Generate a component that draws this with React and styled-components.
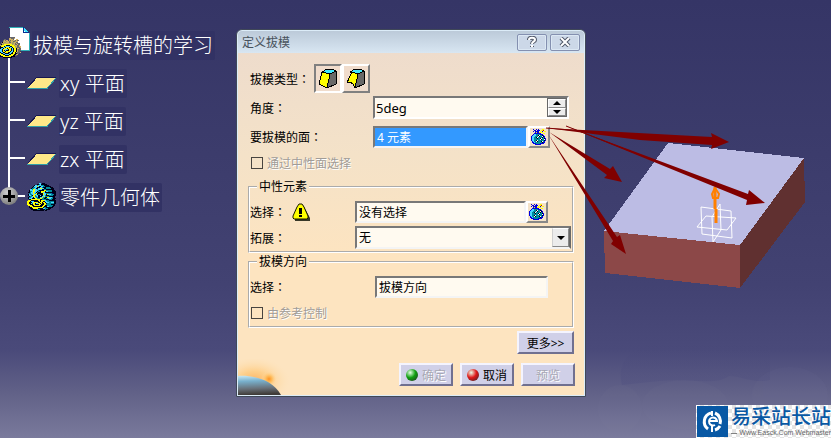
import React, { useState } from "react";
import styled, { createGlobalStyle } from "styled-components";

const planes = ["xy 平面", "yz 平面", "zx 平面"];

// one character is one pixel
const palette = {
  k: "#000018",
  n: "#000080",
  b: "#0000e0",
  c: "#48d8ff",
  t: "#008c9c",
  y: "#ffff00",
  w: "#ffffff",
  r: "#d00000",
  g: "#68686c",
  o: "#d0b060",
  a: "#a0a060",
};

const bagPixels = [
  "..b..b.b...yy...",
  "...bb.bbb.yyr...",
  "..b.bbbb.y.b.yy.",
  "....bybbyyyy....",
  "...bbbbbbb..yy..",
  "..bccttttbbb....",
  ".bcccttkwttkb...",
  "bccctttwkttwkb..",
  "bccttkwttttktb..",
  "bcctttkttkwttkb.",
  "bccttttttwkttwb.",
  "bccttkwttttttkb.",
  ".bcttwktttkwtb..",
  ".bbctttttttkbb..",
  "..bbbttttbbbb...",
  "....bbbbbb......",
];

const bodyPixels = [
  "............cc.kkk............",
  "..........kktckkkkkk..........",
  ".......kcctccctttkkkkk........",
  "......kcccyckkccttkkkkkk......",
  ".....kttcckkkcctkkkttttkkk....",
  "....kttcckkccyycckktttttkkk...",
  "...cctyycctcccckkttkkkkkkkk...",
  "..kcccyyccctkkkkkyyttttttkkk..",
  "..kttcyycckttkyyyykccttttkkkk.",
  ".kktccyccktkkkyycckkkkkkkkkkk.",
  "..ttccyctykkkkkkyccttttttnkkk.",
  ".kcttccyyckttkkkycckyccctttkk.",
  ".kcctkyytcckkckkcctkkkttttkkk.",
  "..kttcyyttckkkkccyttttkkkkkk..",
  ".kttcckycttkkccyttkkyyccctkk..",
  ".kccckkkyytttyyttkkttcccttkkk.",
  "..kkyyyyyyyyykkttttkkktttkkk..",
  ".yyykkkkkkkyykyyyyctttkkkkkkk.",
  "yyykccckkkkkykyykkcctttttttkk.",
  "yykkkcyyyyykkyykyykcccttccckk.",
  "yykkctyykccyykykkyyktttttttkk.",
  "yyykkkyykkkkyykkkyytttttkkkk..",
  ".yyyykkyyyyyykkkyykkttttttkk..",
  "..kyyykkkkkkkkkyykkkcctttkk...",
  "..kkkyyyyyyyyyyykttkkkkkkk....",
  "...kkkyyyyykkkkkcctttkkk......",
  "....kkkkkktttkkkkktkkkk.......",
  "......kkkkkkkkkkk.kk..........",
];

const gearPixels = [
  "..........ggggg.......",
  ".........oogggo.......",
  "....gg...oooog..oo....",
  "...gogoo.ogoaoogogg...",
  "...aooaoogaooggaoo....",
  ".gkoaaoooggoaaoogg....",
  ".goaooooooooaaogoggg..",
  "gkaayyyyyyyyaooggogg..",
  "ooyyyykkkkyyyyaooggo..",
  "kyyykccccckkyyyaoggoo.",
  "kkkcckyyykcckyyoagggo.",
  "kcckyyykyyykckyykoogg.",
  "cckyyccckyykckyykaggg.",
  "cckykckkkyykckyykoggg.",
  "cckyykyyyykcckyykogg..",
  "kcckkyyykkcckyykogggo.",
  "ykkcckkkkcckkyykkgg...",
  "yyykkcccckkyyykkoo....",
  "kyyyykkkkyyyykkgg.....",
  "kkkyyyyyyyykkkk.......",
  "...kkkkkkkkk..........",
];

function PixelIcon({ rows, width, height }) {
  return (
    <svg
      width={width}
      height={height}
      viewBox={`0 0 ${width} ${height}`}
      shapeRendering="crispEdges"
      aria-hidden="true"
    >
      {rows.map((row, y) =>
        row
          .split("")
          .map((char, x) =>
            palette[char] ? (
              <rect
                key={x + "-" + y}
                x={x}
                y={y}
                width="1"
                height="1"
                fill={palette[char]}
              />
            ) : null
          )
      )}
    </svg>
  );
}

function PlaneIcon() {
  return (
    <svg width="30" height="14" viewBox="0 0 30 14" shapeRendering="crispEdges">
      <polygon points="10,1 29,1 20,12 1,12" fill="#ffe888" />
      <path d="M1 11 L10 1 H29" stroke="#181850" fill="none" />
      <path d="M0 12.500 H20 L29 2" stroke="#30a0a8" fill="none" />
    </svg>
  );
}

function RootIcon() {
  return (
    <RootIconBox>
      <svg width="21" height="25" viewBox="0 0 21 25" shapeRendering="crispEdges">
        <polygon points="1,1 14,1 20,7 20,24 1,24" fill="#fff" />
        <path d="M0 1 H14 M20 7 V24 H6" stroke="#30b0b8" fill="none" />
        <polygon points="14,1 20,7 14,5" fill="#40e0ff" />
        <path d="M14 1 V6 H20" stroke="#003090" fill="none" />
      </svg>
      <RootGear>
        <PixelIcon rows={gearPixels} width={22} height={21} />
      </RootGear>
    </RootIconBox>
  );
}

function DraftIcon({ curved }) {
  return (
    <svg width="20" height="21" viewBox="0 0 20 21" shapeRendering="crispEdges">
      <g stroke="#000" strokeLinejoin="round">
        <polygon points="12,6 18,3 18,16 9,20" fill="#686868" />
        <polygon points="4,4 9,1 14,1 18,3 12,6" fill="#40e8ff" />
        {curved ? (
          <path
            d="M6 4 L12 6 L9 20 L7 16 L4 14 L1 15 L3 10 Z"
            fill="#ffff00"
          />
        ) : (
          <polygon points="4,4 12,6 9,20 1,16" fill="#ffff00" />
        )}
      </g>
    </svg>
  );
}

function WarningIcon() {
  return (
    <svg width="19" height="19" viewBox="0 0 19 19">
      <path d="M11 2 L18 15 V18 H3 V16 Z" fill="#383828" />
      <path
        d="M7 1 H10 L12 4 L16 13 V15 L15 16 H2 L1 15 V13 L5 4 Z"
        fill="#ffff00"
        stroke="#181800"
      />
      <path d="M7 5 H10 V11 H7 Z M7 12 H10 V14 H7 Z" fill="#000" />
    </svg>
  );
}

function Planet() {
  return (
    <svg width="56" height="36" viewBox="0 0 56 36">
      <defs>
        <radialGradient id="glow" cx="50%" cy="50%" r="50%">
          <stop offset="0" stopColor="#ff9020" />
          <stop offset="0.4" stopColor="#ffb850" stopOpacity="0.8" />
          <stop offset="1" stopColor="#ffe0b0" stopOpacity="0" />
        </radialGradient>
        <linearGradient id="planet" x1="0" y1="0" x2="0.1" y2="1">
          <stop offset="0" stopColor="#c8e8f4" />
          <stop offset="0.3" stopColor="#78b0cc" />
          <stop offset="0.7" stopColor="#687078" />
          <stop offset="1" stopColor="#403c38" />
        </linearGradient>
      </defs>
      <ellipse cx="16" cy="22" rx="36" ry="24" fill="url(#glow)" opacity="0.6" />
      <circle cx="31" cy="20" r="8" fill="url(#glow)" />
      <path d="M0 17 C14 16 34 20 43 36 H0 Z" fill="url(#planet)" />
    </svg>
  );
}

function Model() {
  return (
    <ModelSvg viewBox="586 0 245 438" preserveAspectRatio="xMinYMin meet">
      <defs>
        <linearGradient id="cloud" x1="0" y1="0" x2="0" y2="1">
          <stop offset="0" stopColor="#484878" stopOpacity="0.2" />
          <stop offset="1" stopColor="#505080" stopOpacity="0.4" />
        </linearGradient>
      </defs>
      <path
        d="M622 385 C616 362 630 348 656 345 H770 V380 C755 384 740 376 729 376 C716 386 690 378 660 381 Z"
        fill="url(#cloud)"
      />
      <g fill="#8888a8" opacity="0.05">
        <ellipse cx="620" cy="409" rx="22" ry="24" />
        <ellipse cx="685" cy="405" rx="43" ry="25" />
        <ellipse cx="790" cy="395" rx="38" ry="28" />
      </g>
      <g shapeRendering="crispEdges">
        <polygon points="668,143 804,158 740,246 604,231" fill="#bcbce4" />
        <polygon points="604,231 740,245 740,288 605,273" fill="#8c4848" />
        <polygon points="740,245 804,158 805,202 740,288" fill="#603030" />
      </g>
      <g fill="none" stroke="#fff">
        <polygon points="701,207 731,211 732,238 702,234" />
        <polygon points="706,216 736,218 727,230 697,227" />
        <polygon points="720,204 721,230 713,242 712,217" />
      </g>
      <g stroke="#ff8000" fill="none">
        <path d="M716 223 V209 M715 209 V187" strokeWidth="3" />
        <path d="M715 188 L712 194 L713 198 H718 L719 194 Z" strokeWidth="2" />
      </g>
      <g fill="#800000">
        <polygon points="546,128 712,137 711,133 729,142 711,149 712,145 640,140" />
        <polygon points="549,132 610,169 613,166 622,182 604,178 607,175" />
        <polygon points="548,134 617,237 620,235 626,254 611,244 613,241" />
        <polygon points="566,126 748,194 749,190 765,203 746,205 747,200" />
      </g>
      <path
        d="M546 128 L620 134 M566 126 L640 155"
        stroke="#800000"
        fill="none"
      />
    </ModelSvg>
  );
}

function App() {
  const [type, setType] = useState("normal");
  const [angle, setAngle] = useState(5);
  const [open, setOpen] = useState(false);

  return (
    <>
      <GlobalStyle />
      <Page>
        <Tree>
          <RootNode>
            <RootIcon />
            <NodeLabel>拔模与旋转槽的学习</NodeLabel>
          </RootNode>
          <NodeList>
            {planes.map((item) => (
              <Node key={item}>
                <Branch />
                <NodeIcon>
                  <PlaneIcon />
                </NodeIcon>
                <NodeLabel>{item}</NodeLabel>
              </Node>
            ))}
            <Node>
              <Branch $last />
              <ExpandBtn
                type="button"
                aria-label="零件几何体"
                aria-expanded={open}
                onClick={() => setOpen(!open)}
              />
              <NodeIcon>
                <PixelIcon rows={bodyPixels} width={30} height={28} />
              </NodeIcon>
              <NodeLabel>零件几何体</NodeLabel>
            </Node>
          </NodeList>
        </Tree>

        <Dialog onSubmit={(e) => e.preventDefault()}>
          <TitleBar>
            <Title>定义拔模</Title>
            <TitleBtn type="button" aria-label="?">
              <svg width="12" height="12" viewBox="0 0 12 12" fill="none">
                <path
                  d="M3 4 C3 1 9 1 9 4 C9 6 6 5 6 8 M6 10 V11"
                  stroke="#505868"
                  strokeWidth="4"
                />
                <path
                  d="M3 4 C3 1 9 1 9 4 C9 6 6 5 6 8 M6 9 V11"
                  stroke="#fff"
                  strokeWidth="2"
                />
              </svg>
            </TitleBtn>
            <TitleBtn type="button" aria-label="x">
              <svg width="12" height="10" viewBox="0 0 12 10" fill="none">
                <path d="M2 1 L10 9 M10 1 L2 9" stroke="#505868" strokeWidth="4" />
                <path d="M2 1 L10 9 M10 1 L2 9" stroke="#fff" strokeWidth="2" />
              </svg>
            </TitleBtn>
          </TitleBar>

          <Content>
            <Fields>
              <Row $end={6}>
                <TypeLabel>
                  拔模类型<Colon>：</Colon>
                </TypeLabel>
                <TypeBtn
                  type="button"
                  aria-label="拔模类型 1"
                  $active={type === "normal"}
                  onClick={() => setType("normal")}
                >
                  <DraftIcon />
                </TypeBtn>
                <TypeBtn
                  type="button"
                  aria-label="拔模类型 2"
                  $active={type === "curved"}
                  onClick={() => setType("curved")}
                >
                  <DraftIcon curved />
                </TypeBtn>
              </Row>
              <Row $top={3} $end={5}>
                <Label htmlFor="angle">
                  <span>
                    角度<Colon>：</Colon>
                  </span>
                </Label>
                <SpinBox>
                  <SpinInput
                    id="angle"
                    value={angle + "deg"}
                    onChange={(e) => setAngle(parseInt(e.target.value) || 0)}
                  />
                  <SpinBtns>
                    <SpinBtn
                      type="button"
                      aria-label="+"
                      onClick={() => setAngle(angle + 1)}
                    >
                      <svg width="8" height="4" viewBox="0 0 8 4">
                        <path d="M0 4 L4 0 L8 4 Z" />
                      </svg>
                    </SpinBtn>
                    <SpinBtn
                      type="button"
                      aria-label="-"
                      onClick={() => setAngle(angle - 1)}
                    >
                      <svg width="8" height="4" viewBox="0 0 8 4">
                        <path d="M0 0 L4 4 L8 0 Z" />
                      </svg>
                    </SpinBtn>
                  </SpinBtns>
                </SpinBox>
              </Row>
              <Row $top={7} $end={24}>
                <Label htmlFor="faces">
                  <span>
                    要拔模的面<Colon>：</Colon>
                  </span>
                </Label>
                <TextInput id="faces" defaultValue="4 元素" $selected />
                <BagBtn type="button" aria-label="要拔模的面">
                  <PixelIcon rows={bagPixels} width={16} height={16} />
                </BagBtn>
              </Row>
              <Row $top={4}>
                <CheckLabel>
                  <CheckBox type="checkbox" disabled />
                  通过中性面选择
                </CheckLabel>
              </Row>

              <Group $top={5}>
                <Legend>中性元素</Legend>
                <GroupRow $top={6} $end={24}>
                  <Label htmlFor="neutral" $width={105}>
                    <span>
                      选择<Colon>：</Colon>
                    </span>
                    <WarningIcon />
                  </Label>
                  <TextInput id="neutral" defaultValue="没有选择" />
                  <BagBtn type="button" aria-label="选择">
                    <PixelIcon rows={bagPixels} width={16} height={16} />
                  </BagBtn>
                </GroupRow>
                <GroupRow $top={3} $end={1}>
                  <Label htmlFor="spread" $width={105}>
                    <span>
                      拓展<Colon>：</Colon>
                    </span>
                  </Label>
                  <SelectBox>
                    <Select id="spread" defaultValue="无">
                      <option>无</option>
                    </Select>
                    <SelectArrow>
                      <svg width="8" height="4" viewBox="0 0 8 4">
                        <path d="M0 0 L4 4 L8 0 Z" />
                      </svg>
                    </SelectArrow>
                  </SelectBox>
                </GroupRow>
              </Group>

              <Group $top={1}>
                <Legend>拔模方向</Legend>
                <GroupRow $top={6} $end={24}>
                  <Label htmlFor="direction" $width={125}>
                    <span>
                      选择<Colon>：</Colon>
                    </span>
                  </Label>
                  <TextInput id="direction" defaultValue="拔模方向" />
                </GroupRow>
                <GroupRow $top={4}>
                  <CheckLabel>
                    <CheckBox type="checkbox" disabled />
                    由参考控制
                  </CheckLabel>
                </GroupRow>
              </Group>

              <MoreRow>
                <Button type="button" $wide>
                  更多&gt;&gt;
                </Button>
              </MoreRow>
            </Fields>

            <Footer>
              <Planet />
              <Buttons>
                <Button disabled>
                  <Ball color="#10a010" />
                  确定
                </Button>
                <Button type="button">
                  <Ball color="#e01818" />
                  取消
                </Button>
                <Button type="button" disabled>
                  预览
                </Button>
              </Buttons>
            </Footer>
          </Content>
        </Dialog>

        <Model />

        <Watermark>
          <svg width="31" height="31" viewBox="0 0 31 31">
            <rect width="31" height="31" fill="#0858a4" />
            <g fill="none" stroke="#fff" strokeWidth="3">
              <path d="M14 7 A9 9 0 0 0 11 23" />
              <path d="M18 7 A9 9 0 0 1 23 18" />
              <path d="M18 24 A9 9 0 0 0 23 20" />
              <path d="M12 15 H20 A4 4 0 1 0 18 19" strokeWidth="2" />
              <path d="M15 5 V10 M15 20 V26" strokeWidth="2" />
            </g>
          </svg>
          <WatermarkText>
            <WatermarkName>易采站长站</WatermarkName>
            <WatermarkUrl>Www.Easck.Com Webmaster</WatermarkUrl>
          </WatermarkText>
        </Watermark>
      </Page>
    </>
  );
}

const GlobalStyle = createGlobalStyle`
  * {
    box-sizing: border-box;
  }
  body {
    margin: 0;
    font-family: "Noto Sans", "Noto Sans CJK SC", sans-serif;
    font-size: 12px;
  }
  button, input, select {
    font: inherit;
    margin: 0;
  }
  svg {
    display: block;
    flex: none;
  }
`;
const Page = styled.main`
  position: relative;
  display: grid;
  grid-template-columns: minmax(0, 236fr) minmax(0, 350fr) minmax(0, 245fr);
  align-items: start;
  min-height: 100vh;
  overflow: hidden;
  background: linear-gradient(
    #353566 0%,
    #3c3c6c 35%,
    #424272 65%,
    #4a4a7a 80%,
    #626288 90%,
    #7a7a9c 100%
  );
`;

const Tree = styled.nav`
  padding-top: 26px;
  color: white;
  font-size: 20px;
  font-weight: 300;
  white-space: nowrap;
`;
const RootNode = styled.div`
  display: flex;
  align-items: center;
  gap: 2px;
  height: 38px;
  background: linear-gradient(white, white) 8px 100% / 2px 10px no-repeat;
`;
const RootIconBox = styled.div`
  position: relative;
  align-self: flex-start;
  width: 30px;
  height: 32px;
  padding-left: 9px;
`;
const RootGear = styled.div`
  position: absolute;
  left: 0;
  bottom: 0;
`;
const NodeList = styled.ul`
  list-style: none;
  margin: 0;
  padding: 0 0 0 8px;
`;
const Node = styled.li`
  position: relative;
  display: flex;
  align-items: center;
  height: 38px;
`;
const Branch = styled.span`
  align-self: ${(props) => (props.$last ? "flex-start" : "stretch")};
  width: 17px;
  height: ${(props) => (props.$last ? "19px" : "auto")};
  border-left: 2px solid white;
  background: linear-gradient(white, white) 0 17px / 17px 2px no-repeat;
`;
const ExpandBtn = styled.button`
  position: absolute;
  left: -8px;
  top: 9px;
  width: 18px;
  height: 18px;
  padding: 0;
  border: none;
  border-radius: 50%;
  background:
    linear-gradient(black, black) center / 12px 3px no-repeat,
    linear-gradient(black, black) center / 3px 12px no-repeat,
    radial-gradient(circle at 40% 30%, #d0d0d0, #909090 60%, #606060);
`;
const NodeIcon = styled.span`
  display: flex;
  justify-content: center;
  width: 34px;
`;
const NodeLabel = styled.span`
  height: 29px;
  padding: 0 2px 0 1px;
  border-radius: 2px;
  background-color: #323264;
  line-height: 29px;
`;

const Dialog = styled.form`
  margin-top: 29px;
  padding: 1px;
  border: 1px solid #404858;
  border-radius: 6px 6px 0 0;
  background-color: #dcecf8;
`;
const TitleBar = styled.header`
  display: flex;
  align-items: center;
  gap: 3px;
  height: 22px;
  padding: 0 4px;
  border-radius: 4px 4px 0 0;
  background: linear-gradient(#bccad9, #d8e6f2);
  color: #48525c;
`;
const Title = styled.span`
  flex: 1;
`;
const TitleBtn = styled.button`
  display: flex;
  align-items: center;
  justify-content: center;
  width: 30px;
  height: 17px;
  padding: 0;
  border: 1px solid #8490b0;
  border-radius: 2px;
  background-color: #ccd8e8;
  box-shadow: inset 0 0 0 1px #dce8f4;
`;
const Content = styled.div`
  background: linear-gradient(#eedccc, #f4e2c8 30%, #fde4c0 60%, #fde4c0);
`;
const Fields = styled.div`
  padding: 11px 10px 0;
`;
const Row = styled.div`
  display: flex;
  align-items: center;
  margin-top: ${(props) => props.$top || 0}px;
  padding-left: 2px;
  padding-right: ${(props) => props.$end || 0}px;
`;
const GroupRow = styled(Row)`
  padding-left: 0;
`;
const Label = styled.label`
  display: flex;
  align-items: center;
  gap: 6px;
  flex: none;
  width: ${(props) => props.$width || 123}px;
`;
const Colon = styled.span`
  font-family: "Noto Sans CJK TC", sans-serif;
  line-height: 1;
`;
const TypeLabel = styled.span`
  width: 64px;
`;
const TypeBtn = styled.button`
  display: flex;
  align-items: center;
  justify-content: center;
  width: 28px;
  height: 29px;
  padding: 0;
  border: 2px solid;
  border-color: ${(props) =>
    props.$active ? "#808080 #fff #fff #808080" : "#fff #808080 #808080 #fff"};
  background-color: #f0dccc;
`;
const TextInput = styled.input`
  flex: 1;
  min-width: 0;
  height: 22px;
  padding: 0 2px;
  border: 2px solid;
  border-color: #787878 #f4f4f4 #f4f4f4 #787878;
  border-radius: 0;
  outline: none;
  background-color: ${(props) => (props.$selected ? "#3399ff" : "#fffaf0")};
  color: ${(props) => (props.$selected ? "white" : "black")};
`;
const SpinBox = styled.div`
  display: flex;
  flex: 1;
  min-width: 0;
  height: 23px;
  border: 2px solid;
  border-color: #787878 #fff #fff #787878;
  background-color: #fffaf0;
`;
const SpinInput = styled.input`
  flex: 1;
  width: 100%;
  min-width: 0;
  padding: 0 1px;
  border: none;
  outline: none;
  background-color: transparent;
  font-size: 13px;
`;
const SpinBtns = styled.div`
  display: flex;
  flex: none;
  flex-direction: column;
  width: 20px;
  border: 1px solid #686868;
`;
const SpinBtn = styled.button`
  display: flex;
  flex: 1;
  align-items: center;
  justify-content: center;
  padding: 0;
  border: 1px solid;
  border-color: #fff #888 #888 #fff;
  background-color: #ececec;
`;
const BagBtn = styled.button`
  display: flex;
  align-items: center;
  justify-content: center;
  width: 22px;
  height: 22px;
  padding: 0;
  border: 2px solid;
  border-color: #fff #888 #888 #fff;
  background-color: #f4e2c8;
`;
const CheckLabel = styled.label`
  display: flex;
  align-items: center;
  gap: 4px;
  height: 22px;
  padding-left: 1px;
  color: #a09c98;
  text-shadow: 1px 1px 0 white;
`;
const CheckBox = styled.input`
  appearance: none;
  width: 12px;
  height: 12px;
  border: 1px solid #484440;
`;
const Group = styled.fieldset`
  min-width: 0;
  margin: ${(props) => props.$top}px 0 0;
  padding: 0 0 2px;
  border: 2px groove white;
`;
const Legend = styled.legend`
  margin-left: 7px;
  padding: 0 2px;
  line-height: 16px;
`;
const SelectBox = styled.div`
  display: grid;
  flex: 1;
  height: 23px;
  border: 2px solid;
  border-color: #787878 #686868 #f4f4f4 #787878;
  background-color: #fffaf0;
`;
const Select = styled.select`
  grid-area: 1 / 1;
  appearance: none;
  padding: 0 2px;
  border: none;
  outline: none;
  background-color: transparent;
  color: black;
`;
const SelectArrow = styled.span`
  grid-area: 1 / 1;
  justify-self: end;
  display: flex;
  align-items: center;
  justify-content: center;
  width: 17px;
  border: 1px solid;
  border-color: #fff #888 #888 #d0d0d0;
  background-color: #ececec;
  pointer-events: none;
`;
const MoreRow = styled.div`
  display: flex;
  justify-content: flex-end;
  padding: 3px 0 5px;
`;
const Button = styled.button`
  display: flex;
  align-items: center;
  justify-content: center;
  gap: 4px;
  width: ${(props) => (props.$wide ? 57 : 54)}px;
  height: 23px;
  padding: 0;
  border: 2px solid;
  border-color: #f4f4ff #707090 #707090 #f4f4ff;
  background-color: #d0d0e8;
  color: black;
  white-space: nowrap;
  &:disabled {
    color: #a8a8b4;
    text-shadow: 1px 1px 0 white;
  }
`;
const Ball = styled.span`
  width: 12px;
  height: 12px;
  border-radius: 50%;
  background: radial-gradient(
    circle at 35% 30%,
    #e8ffe8 0,
    ${(props) => props.color} 45%,
    #282828 100%
  );
`;
const Footer = styled.footer`
  display: flex;
  align-items: flex-end;
  justify-content: space-between;
`;
const Buttons = styled.div`
  display: flex;
  gap: 7px;
  padding: 0 9px 9px 0;
`;

const ModelSvg = styled.svg`
  position: relative;
  width: 100%;
  overflow: visible;
  pointer-events: none;
`;

const Watermark = styled.aside`
  position: absolute;
  right: 0;
  bottom: 0;
  display: flex;
  align-items: center;
  gap: 3px;
  height: 33px;
  padding: 1px 0 1px 1px;
  background: repeating-conic-gradient(#e4e4e4 0 25%, white 0 50%) 0 0 / 8px 8px;
`;
const WatermarkText = styled.div`
  width: 100px;
  font-family: "Liberation Sans", "Noto Sans CJK SC", sans-serif;
`;
const WatermarkName = styled.div`
  color: #0858a4;
  font-size: 20px;
  font-weight: 500;
  line-height: 23px;
  white-space: nowrap;
`;
const WatermarkUrl = styled.div`
  display: flex;
  align-items: center;
  gap: 2px;
  color: #686868;
  font-size: 7px;
  line-height: 8px;
  white-space: nowrap;
  &::before {
    content: "";
    flex: 1;
    height: 1px;
    background-color: #808080;
  }
`;

export default App;
